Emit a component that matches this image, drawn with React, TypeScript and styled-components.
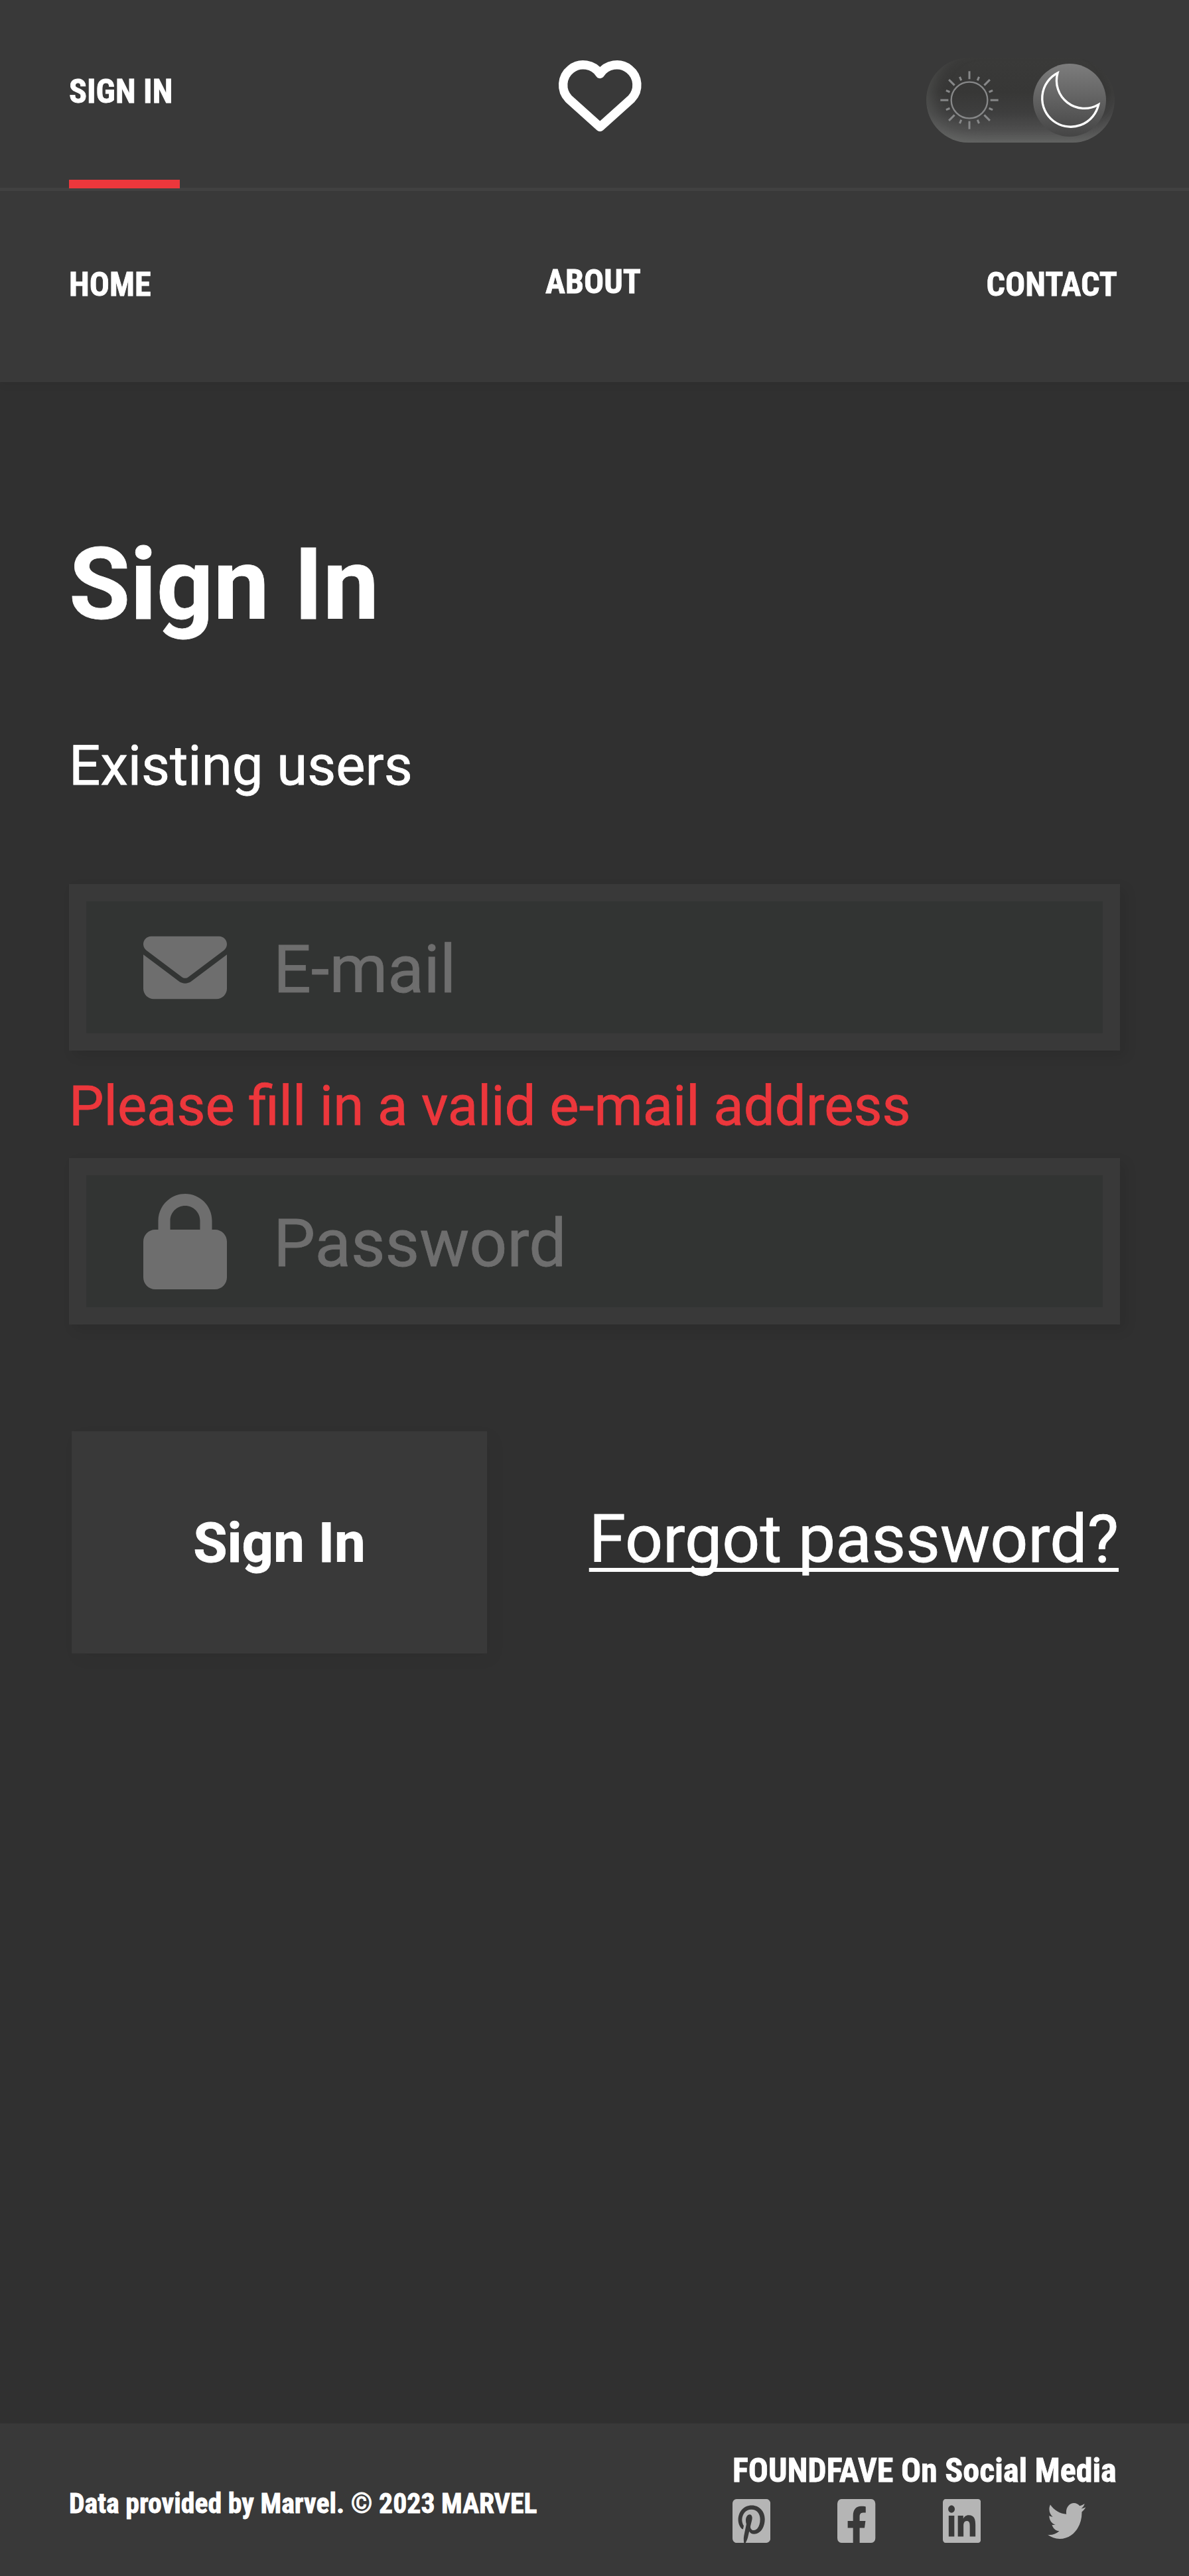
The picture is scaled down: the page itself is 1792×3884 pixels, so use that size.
import React from "react";
import styled, { createGlobalStyle } from "styled-components";
import { FaEnvelope, FaLock } from "react-icons/fa6";
import {
  FaFacebookSquare,
  FaLinkedin,
  FaPinterestSquare,
  FaTwitter,
} from "react-icons/fa";

const color = {
  page: "#303030",
  surface: "#393939",
  divider: "#414141",
  field: "#323433",
  muted: "#6e6e6e",
  social: "#b5b5b5",
  accent: "#ec373c",
  text: "#ffffff",
};

const condensed = `"Roboto Condensed", Roboto, sans-serif`;

const GlobalStyle = createGlobalStyle`
  *, *::before, *::after { box-sizing: border-box; }
  body {
    margin: 0;
    background: ${color.page};
    color: ${color.text};
    font-family: Roboto, sans-serif;
    -webkit-text-stroke: 0.8px currentColor;
  }
  a { color: inherit; text-decoration: none; }
`;

const Page = styled.div`
  display: flex;
  flex-direction: column;
  width: 1792px;
  min-height: 3884px;
`;

const Header = styled.header`
  background: ${color.surface};
  box-shadow: 0 4px 12px rgba(0, 0, 0, 0.05);
`;

const TopBar = styled.div`
  display: grid;
  grid-template-columns: 1fr auto 1fr;
  align-items: start;
  height: 288px;
  padding: 0 104px;
  border-bottom: 5px solid ${color.divider};
`;

const NavLink = styled.a<{ $lift?: number }>`
  font: 700 50.1px/60px ${condensed};
  margin-bottom: ${(p) => p.$lift ?? 0}px;
`;

const ActiveLink = styled(NavLink)`
  justify-self: start;
  width: 167px;
  height: 284px;
  padding-top: 108px;
  border-bottom: 13px solid ${color.accent};
`;

const Logo = styled.svg`
  width: 126px;
  height: 108px;
  margin: 90px 0 0 16px;
  overflow: visible;
`;

const Toggle = styled.button`
  display: flex;
  justify-content: space-between;
  align-items: center;
  justify-self: end;
  width: 284px;
  height: 128px;
  margin: 87px 8px 0 0;
  padding: 0 13px 0 21px;
  border: 0;
  border-radius: 64px;
  background: linear-gradient(180deg, #3a3a39 0%, #373736 40%, #3e3e3e 65%, #4f4f4f 86%, #5e5f5e 100%);
  box-shadow: inset 16px -12px 24px -10px rgba(110, 112, 110, 0.45),
    inset -9px -12px 16px -8px rgba(95, 97, 95, 0.3);
`;

const Sun = styled.svg`
  width: 88px;
  height: 88px;
`;

const Knob = styled.span`
  display: flex;
  width: 110px;
  height: 110px;
  border-radius: 50%;
  background: linear-gradient(180deg, #7d7d7d 0%, #454545 100%);
`;

const NavBar = styled.nav`
  display: grid;
  grid-template-columns: 1fr auto 1fr;
  align-items: center;
  height: 288px;
  padding: 0 108px 6px 104px;

  ${NavLink}:last-child {
    justify-self: end;
  }
`;

const Main = styled.main`
  display: flex;
  flex-direction: column;
  flex: 1;
  padding: 216px 104px 0;
`;

const Title = styled.h1`
  margin: 0;
  font-size: 150px;
  font-weight: 700;
  line-height: 180px;
`;

const Subtitle = styled.p`
  margin: 133px 0 0;
  font-size: 83.4px;
  line-height: 100px;
`;

const Field = styled.label<{ $gap: number }>`
  display: flex;
  align-items: center;
  gap: 70px;
  height: 251px;
  margin-top: ${(p) => p.$gap}px;
  padding-left: 86px;
  border: 26px solid ${color.surface};
  background: ${color.field};
  color: ${color.muted};
  box-shadow: 8px 8px 18px rgba(0, 0, 0, 0.09);
`;

const Input = styled.input`
  flex: 1;
  min-width: 0;
  height: 150px;
  padding: 6px 0 0;
  border: 0;
  outline: 0;
  background: transparent;
  color: ${color.text};
  font: 400 100px/120px Roboto, sans-serif;
  &::placeholder {
    color: ${color.muted};
    opacity: 1;
  }
`;

const MailIcon = styled(FaEnvelope)`
  width: 126px;
  height: 126px;
`;

const LockIcon = styled(FaLock)`
  width: 126px;
  height: 144px;
`;

const ErrorText = styled.p`
  margin: 34px 0 0;
  color: ${color.accent};
  font-size: 83.4px;
  line-height: 100px;
`;

const Actions = styled.div`
  display: flex;
  justify-content: space-between;
  align-items: center;
  margin-top: 161px;
  padding: 0 2px 0 4px;
`;

const Submit = styled.button`
  width: 626px;
  height: 335px;
  padding: 2px 0 0;
  border: 0;
  background: ${color.surface};
  color: ${color.text};
  font: 700 83.4px/100px Roboto, sans-serif;
  box-shadow: 8px 8px 24px rgba(0, 0, 0, 0.04);
`;

const Forgot = styled.a`
  padding-bottom: 9px;
  font-size: 100.1px;
  line-height: 120px;
  text-decoration: underline;
  text-decoration-thickness: 6px;
  text-underline-offset: 9px;
  text-decoration-skip-ink: none;
`;

const Footer = styled.footer`
  display: flex;
  justify-content: space-between;
  align-items: flex-start;
  height: 230px;
  padding: 41px 108px 0 104px;
  background: ${color.surface};
  font-family: ${condensed};
  font-weight: 700;
`;

const Copyright = styled.p`
  margin: 54px 0 0;
  font-size: 41.75px;
  line-height: 52px;
`;

const Social = styled.section`
  width: 580px;
`;

const SocialTitle = styled.h2`
  margin: 0;
  font-size: 50.1px;
  line-height: 60px;
  white-space: nowrap;
`;

const SocialLinks = styled.div`
  display: flex;
  align-items: flex-start;
  gap: 101px;
  margin-top: 13px;
  color: ${color.social};
`;

const SocialLink = styled.a<{ $height?: number; $top?: number }>`
  display: flex;
  width: 57.3px;
  height: ${(p) => p.$height ?? 66}px;
  margin-top: ${(p) => p.$top ?? 0}px;
  svg {
    width: 100%;
    height: 100%;
  }
`;

const Heart = () => (
  <Logo viewBox="41 30 126 108" fill="none" stroke="#fff" strokeWidth="13.4" strokeLinejoin="round">
    <path d="M104.3 131.5L57 89A30.3 30.3 0 1 1 104.3 51.5A30.3 30.3 0 1 1 151.6 89Z" />
  </Logo>
);

const rays = [0, 45, 90, 135, 180, 225, 270, 315];

const SunIcon = () => (
  <Sun viewBox="-132 -132 264 264" fill="none" stroke="#878889">
    <circle r="82" strokeWidth="7" />
    {rays.map((a) => (
      <path key={a} d="M0 -95V-131" strokeWidth="9" transform={`rotate(${a})`} />
    ))}
    {rays.map((a) => (
      <path key={a} d="M0 -96V-114" strokeWidth="9" transform={`rotate(${a + 22.5})`} />
    ))}
  </Sun>
);

const MoonIcon = () => (
  <svg viewBox="563 110 330 330" width="110" height="110" fill="none" stroke="#fff" strokeWidth="10">
    <path d="M674 152A129 129 0 1 0 859 295A126 126 0 0 1 674 152Z" />
  </svg>
);

const stretch = { preserveAspectRatio: "none" };

export default function App() {
  return (
    <Page>
      <GlobalStyle />
      <Header>
        <TopBar>
          <ActiveLink href="#signin">SIGN IN</ActiveLink>
          <Heart />
          <Toggle type="button" aria-label="Dark mode">
            <SunIcon />
            <Knob>
              <MoonIcon />
            </Knob>
          </Toggle>
        </TopBar>
        <NavBar>
          <NavLink href="#home">HOME</NavLink>
          <NavLink href="#about" $lift={8}>ABOUT</NavLink>
          <NavLink href="#contact">CONTACT</NavLink>
        </NavBar>
      </Header>
      <Main>
        <Title>Sign In</Title>
        <Subtitle>Existing users</Subtitle>
        <Field $gap={128}>
          <MailIcon />
          <Input type="email" placeholder="E-mail" />
        </Field>
        <ErrorText>Please fill in a valid e-mail address</ErrorText>
        <Field $gap={28}>
          <LockIcon />
          <Input type="password" placeholder="Password" />
        </Field>
        <Actions>
          <Submit type="button">Sign In</Submit>
          <Forgot href="#forgot">Forgot password?</Forgot>
        </Actions>
      </Main>
      <Footer>
        <Copyright>Data provided by Marvel. © 2023 MARVEL</Copyright>
        <Social>
          <SocialTitle>FOUNDFAVE On Social Media</SocialTitle>
          <SocialLinks>
            <SocialLink href="#pinterest">
              <FaPinterestSquare viewBox="0 32 448 448" {...stretch} />
            </SocialLink>
            <SocialLink href="#facebook">
              <FaFacebookSquare viewBox="0 32 448 448" {...stretch} />
            </SocialLink>
            <SocialLink href="#linkedin">
              <FaLinkedin viewBox="0 32 448 448" {...stretch} />
            </SocialLink>
            <SocialLink href="#twitter" $height={54} $top={6}>
              <FaTwitter viewBox="0 48 512 416" {...stretch} />
            </SocialLink>
          </SocialLinks>
        </Social>
      </Footer>
    </Page>
  );
}
